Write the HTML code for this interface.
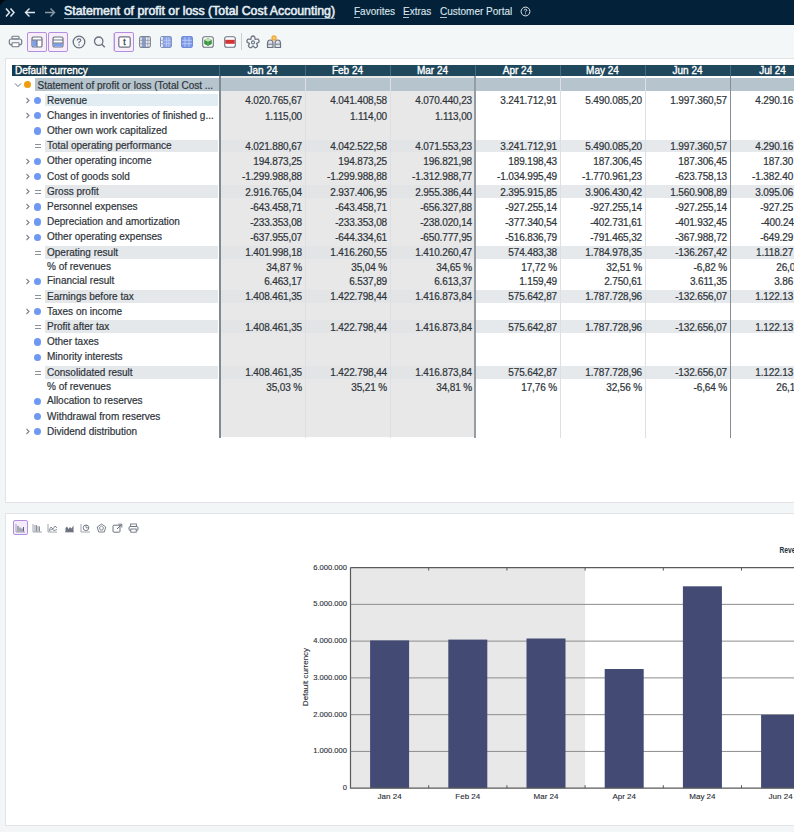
<!DOCTYPE html>
<html><head><meta charset="utf-8"><style>
*{box-sizing:border-box}
html,body{margin:0;padding:0}
body{width:794px;height:832px;overflow:hidden;position:relative;background:#f2f6f7;font-family:"Liberation Sans",sans-serif;color:#2e343a}
.a{position:absolute}
.t{position:absolute;white-space:nowrap;font-size:10px;line-height:12px;-webkit-text-stroke:0.2px currentColor}
.n{letter-spacing:-0.14px}
.r{text-align:right}
</style></head><body>

<div class="a" style="left:0;top:0;width:794px;height:25px;background:#03223a"></div>
<svg class="a" style="left:0;top:0" width="10" height="10" viewBox="0 0 10 10"><path d="M0 0 H8 A8 8 0 0 0 0 8 Z" fill="#02080e"/></svg>
<div class="t" style="left:64px;top:4.6px;font-size:12.35px;line-height:13px;color:#e6eef3;-webkit-text-stroke:0.55px #e6eef3">Statement of profit or loss (Total Cost Accounting)</div>
<div class="a" style="left:64px;top:18.2px;width:271px;height:1px;background:#7fa3b6"></div>
<div class="t" style="left:354px;top:6px;color:#dfe7ec;-webkit-text-stroke:0.1px #dfe7ec">Favorites</div>
<div class="t" style="left:403px;top:6px;color:#dfe7ec;-webkit-text-stroke:0.1px #dfe7ec">Extras</div>
<div class="t" style="left:440px;top:6px;color:#dfe7ec;-webkit-text-stroke:0.1px #dfe7ec">Customer Portal</div>
<div class="a" style="left:0;top:25px;width:794px;height:33px;background:#f3f7f8"></div>
<div class="a" style="left:5px;top:57.6px;width:800px;height:445.4px;background:#fff;border:1px solid #e3e2e7"></div>
<div class="a" style="left:12px;top:65px;width:790px;height:11px;background:#20485c"></div>
<div class="a" style="left:12px;top:65px;width:76px;height:11px;background:#183b4d"></div>
<div class="t" style="left:15px;top:65.3px;color:#fff;-webkit-text-stroke:0.35px #fff">Default currency</div>
<div class="t" style="left:220px;top:65.3px;width:85px;text-align:center;color:#fff;-webkit-text-stroke:0.35px #fff">Jan 24</div>
<div class="t" style="left:305px;top:65.3px;width:85px;text-align:center;color:#fff;-webkit-text-stroke:0.35px #fff">Feb 24</div>
<div class="t" style="left:390px;top:65.3px;width:85px;text-align:center;color:#fff;-webkit-text-stroke:0.35px #fff">Mar 24</div>
<div class="t" style="left:475px;top:65.3px;width:85px;text-align:center;color:#fff;-webkit-text-stroke:0.35px #fff">Apr 24</div>
<div class="t" style="left:560px;top:65.3px;width:85px;text-align:center;color:#fff;-webkit-text-stroke:0.35px #fff">May 24</div>
<div class="t" style="left:645px;top:65.3px;width:85px;text-align:center;color:#fff;-webkit-text-stroke:0.35px #fff">Jun 24</div>
<div class="t" style="left:730px;top:65.3px;width:85px;text-align:center;color:#fff;-webkit-text-stroke:0.35px #fff">Jul 24</div>
<div class="a" style="left:220px;top:76px;width:255px;height:361.3px;background:#e8e8e8"></div>
<div class="a" style="left:35px;top:78.2px;width:770px;height:12.6px;background:#b6c4cd"></div>
<div class="t" style="left:37.5px;top:79.5px;color:#2e343a">Statement of profit or loss (Total Cost ...</div>
<div class="a" style="left:23.5px;top:81.3px;width:7px;height:7px;border-radius:50%;background:#f09c0e"></div>
<svg class="a" style="left:14px;top:82px" width="8" height="6" viewBox="0 0 8 6"><path d="M1 1.5 L4 4.5 L7 1.5" fill="none" stroke="#6b7480" stroke-width="1"/></svg>
<div class="a" style="left:45px;top:94.0px;width:173px;height:12.2px;background:#e1edf2"></div>
<div class="t" style="left:47px;top:94.5px">Revenue</div>
<div class="a" style="left:33.6px;top:96.7px;width:7.6px;height:7.6px;border-radius:50%;background:#6f98f2"></div>
<svg class="a" style="left:24.5px;top:97.0px" width="6" height="7" viewBox="0 0 6 7"><path d="M1.5 1 L4 3.5 L1.5 6" fill="none" stroke="#7a828c" stroke-width="1.1"/></svg>
<div class="t r n" style="left:220px;top:95.4px;width:82px">4.020.765,67</div>
<div class="t r n" style="left:305px;top:95.4px;width:82px">4.041.408,58</div>
<div class="t r n" style="left:390px;top:95.4px;width:82px">4.070.440,23</div>
<div class="t r n" style="left:475px;top:95.4px;width:82px">3.241.712,91</div>
<div class="t r n" style="left:560px;top:95.4px;width:82px">5.490.085,20</div>
<div class="t r n" style="left:645px;top:95.4px;width:82px">1.997.360,57</div>
<div class="t r n" style="left:730px;top:95.4px;width:82px">4.290.16<span style="visibility:hidden">4,87</span></div>
<div class="t" style="left:47px;top:109.7px">Changes in inventories of finished g...</div>
<div class="a" style="left:33.6px;top:111.9px;width:7.6px;height:7.6px;border-radius:50%;background:#6f98f2"></div>
<svg class="a" style="left:24.5px;top:112.2px" width="6" height="7" viewBox="0 0 6 7"><path d="M1.5 1 L4 3.5 L1.5 6" fill="none" stroke="#7a828c" stroke-width="1.1"/></svg>
<div class="t r n" style="left:220px;top:110.6px;width:82px">1.115,00</div>
<div class="t r n" style="left:305px;top:110.6px;width:82px">1.114,00</div>
<div class="t r n" style="left:390px;top:110.6px;width:82px">1.113,00</div>
<div class="t" style="left:47px;top:124.9px">Other own work capitalized</div>
<div class="a" style="left:33.6px;top:127.1px;width:7.6px;height:7.6px;border-radius:50%;background:#6f98f2"></div>
<div class="a" style="left:45px;top:139.5px;width:173px;height:12.8px;background:#e5e8eb"></div>
<div class="a" style="left:220px;top:139.5px;width:255px;height:12.8px;background:#e3e4e6"></div>
<div class="a" style="left:475px;top:139.5px;width:330px;height:12.8px;background:#e6e9ec"></div>
<div class="t" style="left:47px;top:140.1px">Total operating performance</div>
<div class="a" style="left:34.5px;top:144.3px;width:6.5px;height:1px;background:#8a919a"></div>
<div class="a" style="left:34.5px;top:147.3px;width:6.5px;height:1px;background:#8a919a"></div>
<div class="t r n" style="left:220px;top:141.0px;width:82px">4.021.880,67</div>
<div class="t r n" style="left:305px;top:141.0px;width:82px">4.042.522,58</div>
<div class="t r n" style="left:390px;top:141.0px;width:82px">4.071.553,23</div>
<div class="t r n" style="left:475px;top:141.0px;width:82px">3.241.712,91</div>
<div class="t r n" style="left:560px;top:141.0px;width:82px">5.490.085,20</div>
<div class="t r n" style="left:645px;top:141.0px;width:82px">1.997.360,57</div>
<div class="t r n" style="left:730px;top:141.0px;width:82px">4.290.16<span style="visibility:hidden">4,87</span></div>
<div class="t" style="left:47px;top:155.3px">Other operating income</div>
<div class="a" style="left:33.6px;top:157.5px;width:7.6px;height:7.6px;border-radius:50%;background:#6f98f2"></div>
<svg class="a" style="left:24.5px;top:157.8px" width="6" height="7" viewBox="0 0 6 7"><path d="M1.5 1 L4 3.5 L1.5 6" fill="none" stroke="#7a828c" stroke-width="1.1"/></svg>
<div class="t r n" style="left:220px;top:156.2px;width:82px">194.873,25</div>
<div class="t r n" style="left:305px;top:156.2px;width:82px">194.873,25</div>
<div class="t r n" style="left:390px;top:156.2px;width:82px">196.821,98</div>
<div class="t r n" style="left:475px;top:156.2px;width:82px">189.198,43</div>
<div class="t r n" style="left:560px;top:156.2px;width:82px">187.306,45</div>
<div class="t r n" style="left:645px;top:156.2px;width:82px">187.306,45</div>
<div class="t r n" style="left:730px;top:156.2px;width:82px">187.30<span style="visibility:hidden">6,45</span></div>
<div class="t" style="left:47px;top:170.5px">Cost of goods sold</div>
<div class="a" style="left:33.6px;top:172.7px;width:7.6px;height:7.6px;border-radius:50%;background:#6f98f2"></div>
<svg class="a" style="left:24.5px;top:173.0px" width="6" height="7" viewBox="0 0 6 7"><path d="M1.5 1 L4 3.5 L1.5 6" fill="none" stroke="#7a828c" stroke-width="1.1"/></svg>
<div class="t r n" style="left:220px;top:171.4px;width:82px">-1.299.988,88</div>
<div class="t r n" style="left:305px;top:171.4px;width:82px">-1.299.988,88</div>
<div class="t r n" style="left:390px;top:171.4px;width:82px">-1.312.988,77</div>
<div class="t r n" style="left:475px;top:171.4px;width:82px">-1.034.995,49</div>
<div class="t r n" style="left:560px;top:171.4px;width:82px">-1.770.961,23</div>
<div class="t r n" style="left:645px;top:171.4px;width:82px">-623.758,13</div>
<div class="t r n" style="left:730px;top:171.4px;width:82px">-1.382.40<span style="visibility:hidden">4,12</span></div>
<div class="a" style="left:45px;top:185.1px;width:173px;height:12.8px;background:#e5e8eb"></div>
<div class="a" style="left:220px;top:185.1px;width:255px;height:12.8px;background:#e3e4e6"></div>
<div class="a" style="left:475px;top:185.1px;width:330px;height:12.8px;background:#e6e9ec"></div>
<div class="t" style="left:47px;top:185.7px">Gross profit</div>
<div class="a" style="left:34.5px;top:189.9px;width:6.5px;height:1px;background:#8a919a"></div>
<div class="a" style="left:34.5px;top:192.9px;width:6.5px;height:1px;background:#8a919a"></div>
<svg class="a" style="left:24.5px;top:188.2px" width="6" height="7" viewBox="0 0 6 7"><path d="M1.5 1 L4 3.5 L1.5 6" fill="none" stroke="#7a828c" stroke-width="1.1"/></svg>
<div class="t r n" style="left:220px;top:186.6px;width:82px">2.916.765,04</div>
<div class="t r n" style="left:305px;top:186.6px;width:82px">2.937.406,95</div>
<div class="t r n" style="left:390px;top:186.6px;width:82px">2.955.386,44</div>
<div class="t r n" style="left:475px;top:186.6px;width:82px">2.395.915,85</div>
<div class="t r n" style="left:560px;top:186.6px;width:82px">3.906.430,42</div>
<div class="t r n" style="left:645px;top:186.6px;width:82px">1.560.908,89</div>
<div class="t r n" style="left:730px;top:186.6px;width:82px">3.095.06<span style="visibility:hidden">7,20</span></div>
<div class="t" style="left:47px;top:200.9px">Personnel expenses</div>
<div class="a" style="left:33.6px;top:203.1px;width:7.6px;height:7.6px;border-radius:50%;background:#6f98f2"></div>
<svg class="a" style="left:24.5px;top:203.4px" width="6" height="7" viewBox="0 0 6 7"><path d="M1.5 1 L4 3.5 L1.5 6" fill="none" stroke="#7a828c" stroke-width="1.1"/></svg>
<div class="t r n" style="left:220px;top:201.8px;width:82px">-643.458,71</div>
<div class="t r n" style="left:305px;top:201.8px;width:82px">-643.458,71</div>
<div class="t r n" style="left:390px;top:201.8px;width:82px">-656.327,88</div>
<div class="t r n" style="left:475px;top:201.8px;width:82px">-927.255,14</div>
<div class="t r n" style="left:560px;top:201.8px;width:82px">-927.255,14</div>
<div class="t r n" style="left:645px;top:201.8px;width:82px">-927.255,14</div>
<div class="t r n" style="left:730px;top:201.8px;width:82px">-927.25<span style="visibility:hidden">5,14</span></div>
<div class="t" style="left:47px;top:216.1px">Depreciation and amortization</div>
<div class="a" style="left:33.6px;top:218.3px;width:7.6px;height:7.6px;border-radius:50%;background:#6f98f2"></div>
<svg class="a" style="left:24.5px;top:218.6px" width="6" height="7" viewBox="0 0 6 7"><path d="M1.5 1 L4 3.5 L1.5 6" fill="none" stroke="#7a828c" stroke-width="1.1"/></svg>
<div class="t r n" style="left:220px;top:217.0px;width:82px">-233.353,08</div>
<div class="t r n" style="left:305px;top:217.0px;width:82px">-233.353,08</div>
<div class="t r n" style="left:390px;top:217.0px;width:82px">-238.020,14</div>
<div class="t r n" style="left:475px;top:217.0px;width:82px">-377.340,54</div>
<div class="t r n" style="left:560px;top:217.0px;width:82px">-402.731,61</div>
<div class="t r n" style="left:645px;top:217.0px;width:82px">-401.932,45</div>
<div class="t r n" style="left:730px;top:217.0px;width:82px">-400.24<span style="visibility:hidden">5,11</span></div>
<div class="t" style="left:47px;top:231.3px">Other operating expenses</div>
<div class="a" style="left:33.6px;top:233.5px;width:7.6px;height:7.6px;border-radius:50%;background:#6f98f2"></div>
<svg class="a" style="left:24.5px;top:233.8px" width="6" height="7" viewBox="0 0 6 7"><path d="M1.5 1 L4 3.5 L1.5 6" fill="none" stroke="#7a828c" stroke-width="1.1"/></svg>
<div class="t r n" style="left:220px;top:232.2px;width:82px">-637.955,07</div>
<div class="t r n" style="left:305px;top:232.2px;width:82px">-644.334,61</div>
<div class="t r n" style="left:390px;top:232.2px;width:82px">-650.777,95</div>
<div class="t r n" style="left:475px;top:232.2px;width:82px">-516.836,79</div>
<div class="t r n" style="left:560px;top:232.2px;width:82px">-791.465,32</div>
<div class="t r n" style="left:645px;top:232.2px;width:82px">-367.988,72</div>
<div class="t r n" style="left:730px;top:232.2px;width:82px">-649.29<span style="visibility:hidden">3,61</span></div>
<div class="a" style="left:45px;top:245.9px;width:173px;height:12.8px;background:#e5e8eb"></div>
<div class="a" style="left:220px;top:245.9px;width:255px;height:12.8px;background:#e3e4e6"></div>
<div class="a" style="left:475px;top:245.9px;width:330px;height:12.8px;background:#e6e9ec"></div>
<div class="t" style="left:47px;top:246.5px">Operating result</div>
<div class="a" style="left:34.5px;top:250.7px;width:6.5px;height:1px;background:#8a919a"></div>
<div class="a" style="left:34.5px;top:253.7px;width:6.5px;height:1px;background:#8a919a"></div>
<div class="t r n" style="left:220px;top:247.4px;width:82px">1.401.998,18</div>
<div class="t r n" style="left:305px;top:247.4px;width:82px">1.416.260,55</div>
<div class="t r n" style="left:390px;top:247.4px;width:82px">1.410.260,47</div>
<div class="t r n" style="left:475px;top:247.4px;width:82px">574.483,38</div>
<div class="t r n" style="left:560px;top:247.4px;width:82px">1.784.978,35</div>
<div class="t r n" style="left:645px;top:247.4px;width:82px">-136.267,42</div>
<div class="t r n" style="left:730px;top:247.4px;width:82px">1.118.27<span style="visibility:hidden">3,34</span></div>
<div class="t" style="left:47px;top:260.9px">% of revenues</div>
<div class="t r n" style="left:220px;top:261.8px;width:82px">34,87 %</div>
<div class="t r n" style="left:305px;top:261.8px;width:82px">35,04 %</div>
<div class="t r n" style="left:390px;top:261.8px;width:82px">34,65 %</div>
<div class="t r n" style="left:475px;top:261.8px;width:82px">17,72 %</div>
<div class="t r n" style="left:560px;top:261.8px;width:82px">32,51 %</div>
<div class="t r n" style="left:645px;top:261.8px;width:82px">-6,82 %</div>
<div class="t r n" style="left:730px;top:261.8px;width:82px">26,0<span style="visibility:hidden">7 %</span></div>
<div class="t" style="left:47px;top:275.3px">Financial result</div>
<div class="a" style="left:33.6px;top:277.5px;width:7.6px;height:7.6px;border-radius:50%;background:#6f98f2"></div>
<svg class="a" style="left:24.5px;top:277.8px" width="6" height="7" viewBox="0 0 6 7"><path d="M1.5 1 L4 3.5 L1.5 6" fill="none" stroke="#7a828c" stroke-width="1.1"/></svg>
<div class="t r n" style="left:220px;top:276.2px;width:82px">6.463,17</div>
<div class="t r n" style="left:305px;top:276.2px;width:82px">6.537,89</div>
<div class="t r n" style="left:390px;top:276.2px;width:82px">6.613,37</div>
<div class="t r n" style="left:475px;top:276.2px;width:82px">1.159,49</div>
<div class="t r n" style="left:560px;top:276.2px;width:82px">2.750,61</div>
<div class="t r n" style="left:645px;top:276.2px;width:82px">3.611,35</div>
<div class="t r n" style="left:730px;top:276.2px;width:82px">3.86<span style="visibility:hidden">2,40</span></div>
<div class="a" style="left:45px;top:289.9px;width:173px;height:12.8px;background:#e5e8eb"></div>
<div class="a" style="left:220px;top:289.9px;width:255px;height:12.8px;background:#e3e4e6"></div>
<div class="a" style="left:475px;top:289.9px;width:330px;height:12.8px;background:#e6e9ec"></div>
<div class="t" style="left:47px;top:290.5px">Earnings before tax</div>
<div class="a" style="left:34.5px;top:294.7px;width:6.5px;height:1px;background:#8a919a"></div>
<div class="a" style="left:34.5px;top:297.7px;width:6.5px;height:1px;background:#8a919a"></div>
<div class="t r n" style="left:220px;top:291.4px;width:82px">1.408.461,35</div>
<div class="t r n" style="left:305px;top:291.4px;width:82px">1.422.798,44</div>
<div class="t r n" style="left:390px;top:291.4px;width:82px">1.416.873,84</div>
<div class="t r n" style="left:475px;top:291.4px;width:82px">575.642,87</div>
<div class="t r n" style="left:560px;top:291.4px;width:82px">1.787.728,96</div>
<div class="t r n" style="left:645px;top:291.4px;width:82px">-132.656,07</div>
<div class="t r n" style="left:730px;top:291.4px;width:82px">1.122.13<span style="visibility:hidden">5,74</span></div>
<div class="t" style="left:47px;top:305.7px">Taxes on income</div>
<div class="a" style="left:33.6px;top:307.9px;width:7.6px;height:7.6px;border-radius:50%;background:#6f98f2"></div>
<svg class="a" style="left:24.5px;top:308.2px" width="6" height="7" viewBox="0 0 6 7"><path d="M1.5 1 L4 3.5 L1.5 6" fill="none" stroke="#7a828c" stroke-width="1.1"/></svg>
<div class="a" style="left:45px;top:320.3px;width:173px;height:12.8px;background:#e5e8eb"></div>
<div class="a" style="left:220px;top:320.3px;width:255px;height:12.8px;background:#e3e4e6"></div>
<div class="a" style="left:475px;top:320.3px;width:330px;height:12.8px;background:#e6e9ec"></div>
<div class="t" style="left:47px;top:320.9px">Profit after tax</div>
<div class="a" style="left:34.5px;top:325.1px;width:6.5px;height:1px;background:#8a919a"></div>
<div class="a" style="left:34.5px;top:328.1px;width:6.5px;height:1px;background:#8a919a"></div>
<div class="t r n" style="left:220px;top:321.8px;width:82px">1.408.461,35</div>
<div class="t r n" style="left:305px;top:321.8px;width:82px">1.422.798,44</div>
<div class="t r n" style="left:390px;top:321.8px;width:82px">1.416.873,84</div>
<div class="t r n" style="left:475px;top:321.8px;width:82px">575.642,87</div>
<div class="t r n" style="left:560px;top:321.8px;width:82px">1.787.728,96</div>
<div class="t r n" style="left:645px;top:321.8px;width:82px">-132.656,07</div>
<div class="t r n" style="left:730px;top:321.8px;width:82px">1.122.13<span style="visibility:hidden">5,74</span></div>
<div class="t" style="left:47px;top:336.1px">Other taxes</div>
<div class="a" style="left:33.6px;top:338.3px;width:7.6px;height:7.6px;border-radius:50%;background:#6f98f2"></div>
<div class="t" style="left:47px;top:351.3px">Minority interests</div>
<div class="a" style="left:33.6px;top:353.5px;width:7.6px;height:7.6px;border-radius:50%;background:#6f98f2"></div>
<div class="a" style="left:45px;top:365.9px;width:173px;height:12.8px;background:#e5e8eb"></div>
<div class="a" style="left:220px;top:365.9px;width:255px;height:12.8px;background:#e3e4e6"></div>
<div class="a" style="left:475px;top:365.9px;width:330px;height:12.8px;background:#e6e9ec"></div>
<div class="t" style="left:47px;top:366.5px">Consolidated result</div>
<div class="a" style="left:34.5px;top:370.7px;width:6.5px;height:1px;background:#8a919a"></div>
<div class="a" style="left:34.5px;top:373.7px;width:6.5px;height:1px;background:#8a919a"></div>
<div class="t r n" style="left:220px;top:367.4px;width:82px">1.408.461,35</div>
<div class="t r n" style="left:305px;top:367.4px;width:82px">1.422.798,44</div>
<div class="t r n" style="left:390px;top:367.4px;width:82px">1.416.873,84</div>
<div class="t r n" style="left:475px;top:367.4px;width:82px">575.642,87</div>
<div class="t r n" style="left:560px;top:367.4px;width:82px">1.787.728,96</div>
<div class="t r n" style="left:645px;top:367.4px;width:82px">-132.656,07</div>
<div class="t r n" style="left:730px;top:367.4px;width:82px">1.122.13<span style="visibility:hidden">5,74</span></div>
<div class="t" style="left:47px;top:380.9px">% of revenues</div>
<div class="t r n" style="left:220px;top:381.8px;width:82px">35,03 %</div>
<div class="t r n" style="left:305px;top:381.8px;width:82px">35,21 %</div>
<div class="t r n" style="left:390px;top:381.8px;width:82px">34,81 %</div>
<div class="t r n" style="left:475px;top:381.8px;width:82px">17,76 %</div>
<div class="t r n" style="left:560px;top:381.8px;width:82px">32,56 %</div>
<div class="t r n" style="left:645px;top:381.8px;width:82px">-6,64 %</div>
<div class="t r n" style="left:730px;top:381.8px;width:82px">26,1<span style="visibility:hidden">6 %</span></div>
<div class="t" style="left:47px;top:395.3px">Allocation to reserves</div>
<div class="a" style="left:33.6px;top:397.5px;width:7.6px;height:7.6px;border-radius:50%;background:#6f98f2"></div>
<div class="t" style="left:47px;top:410.5px">Withdrawal from reserves</div>
<div class="a" style="left:33.6px;top:412.7px;width:7.6px;height:7.6px;border-radius:50%;background:#6f98f2"></div>
<div class="t" style="left:47px;top:425.7px">Dividend distribution</div>
<div class="a" style="left:33.6px;top:427.9px;width:7.6px;height:7.6px;border-radius:50%;background:#6f98f2"></div>
<svg class="a" style="left:24.5px;top:428.2px" width="6" height="7" viewBox="0 0 6 7"><path d="M1.5 1 L4 3.5 L1.5 6" fill="none" stroke="#7a828c" stroke-width="1.1"/></svg>
<div class="a" style="left:219px;top:76px;width:2px;height:361.5px;background:#7f8a92"></div>
<div class="a" style="left:474.3px;top:76px;width:1.6px;height:361.5px;background:#959ca2"></div>
<div class="a" style="left:729.6px;top:76px;width:1.6px;height:361.5px;background:#868d94"></div>
<div class="a" style="left:305px;top:76px;width:1px;height:361.5px;background:#dcdfe6"></div>
<div class="a" style="left:390px;top:76px;width:1px;height:361.5px;background:#dcdfe6"></div>
<div class="a" style="left:560px;top:76px;width:1px;height:361.5px;background:#dcdfe6"></div>
<div class="a" style="left:645px;top:76px;width:1px;height:361.5px;background:#dcdfe6"></div>
<div class="a" style="left:219px;top:65px;width:1px;height:11px;background:#4d6a7c"></div>
<div class="a" style="left:305px;top:65px;width:1px;height:11px;background:#4d6a7c"></div>
<div class="a" style="left:390px;top:65px;width:1px;height:11px;background:#4d6a7c"></div>
<div class="a" style="left:475px;top:65px;width:1px;height:11px;background:#4d6a7c"></div>
<div class="a" style="left:560px;top:65px;width:1px;height:11px;background:#4d6a7c"></div>
<div class="a" style="left:645px;top:65px;width:1px;height:11px;background:#4d6a7c"></div>
<div class="a" style="left:730px;top:65px;width:1px;height:11px;background:#4d6a7c"></div>
<div class="a" style="left:5px;top:513px;width:800px;height:312.8px;background:#fff;border:1px solid #e3e4e7"></div>
<svg class="a" style="left:4px;top:7px" width="12" height="11" viewBox="0 0 12 11"><path d="M2 1.5 L5.5 5.5 L2 9.5 M6.5 1.5 L10 5.5 L6.5 9.5" fill="none" stroke="#dfe8ee" stroke-width="1.5"/></svg>
<svg class="a" style="left:24px;top:7px" width="12" height="11" viewBox="0 0 12 11"><path d="M11 5.5 H1.5 M5.5 1.5 L1.5 5.5 L5.5 9.5" fill="none" stroke="#dfe8ee" stroke-width="1.4"/></svg>
<svg class="a" style="left:44px;top:7px" width="12" height="11" viewBox="0 0 12 11"><path d="M1 5.5 H10.5 M6.5 1.5 L10.5 5.5 L6.5 9.5" fill="none" stroke="#8c9aa6" stroke-width="1.4"/></svg>
<div class="a" style="left:354px;top:17.3px;width:6px;height:0.8px;background:#aebfca"></div>
<div class="a" style="left:403px;top:17.3px;width:6px;height:0.8px;background:#aebfca"></div>
<div class="a" style="left:440px;top:17.3px;width:7px;height:0.8px;background:#aebfca"></div>
<svg class="a" style="left:519.5px;top:6.3px" width="11" height="11" viewBox="0 0 11 11"><circle cx="5.5" cy="5.5" r="4.4" fill="none" stroke="#dfe7ec" stroke-width="1"/><path d="M4.2 4.5 Q4.2 3.2 5.5 3.2 Q6.8 3.2 6.8 4.3 Q6.8 5.1 5.5 5.6 V6.4" fill="none" stroke="#dfe7ec" stroke-width="0.9"/><circle cx="5.5" cy="7.7" r="0.55" fill="#dfe7ec"/></svg>
<svg class="a" style="left:8px;top:35px" width="15" height="13" viewBox="0 0 15 13"><rect x="4" y="1.2" width="7" height="2.8" rx="0.8" fill="none" stroke="#767c86" stroke-width="1.1"/><rect x="1.3" y="4" width="12.4" height="5.8" rx="2" fill="none" stroke="#767c86" stroke-width="1.2"/><rect x="4" y="7.8" width="7" height="4" rx="0.6" fill="#fff" stroke="#767c86" stroke-width="1.1"/></svg>
<div class="a" style="left:27px;top:32px;width:19.5px;height:20px;border:1px solid #b48ee3;border-radius:2px;background:#f8eefa"></div>
<div class="a" style="left:48px;top:32px;width:19.5px;height:20px;border:1px solid #b48ee3;border-radius:2px;background:#f8eefa"></div>
<div class="a" style="left:114px;top:32px;width:19.5px;height:20px;border:1px solid #b48ee3;border-radius:2px;background:#f8eefa"></div>
<svg class="a" style="left:30.5px;top:36px" width="12" height="12" viewBox="0 0 12 12"><rect x="1" y="1" width="10" height="10" rx="1.6" fill="#fff" stroke="#6b7280" stroke-width="1.2"/><rect x="1.6" y="4.2" width="4.4" height="6.2" fill="#7b9ef0"/><path d="M1 4 H11 M6 4 V11" stroke="#6b7280" stroke-width="1.1"/></svg>
<svg class="a" style="left:52px;top:36px" width="12" height="12" viewBox="0 0 12 12"><rect x="1" y="1" width="10" height="10" rx="1.6" fill="#fff" stroke="#6b7280" stroke-width="1.2"/><rect x="1.6" y="7.3" width="8.8" height="3.1" fill="#7b9ef0"/><path d="M1 4 H11 M1 7 H11" stroke="#6b7280" stroke-width="1.1"/></svg>
<svg class="a" style="left:72px;top:35px" width="14" height="14" viewBox="0 0 14 14"><circle cx="7" cy="7" r="5.8" fill="none" stroke="#6b7280" stroke-width="1.3"/><path d="M5.2 5.6 Q5.2 3.8 7 3.8 Q8.8 3.8 8.8 5.3 Q8.8 6.4 7 7.2 V8.3" fill="none" stroke="#6b7280" stroke-width="1.2"/><circle cx="7" cy="10.1" r="0.75" fill="#6b7280"/></svg>
<svg class="a" style="left:93px;top:36px" width="13" height="12" viewBox="0 0 13 12"><circle cx="5.7" cy="5.2" r="4.2" fill="none" stroke="#6b7280" stroke-width="1.3"/><path d="M8.8 8.3 L11.8 11.2" stroke="#6b7280" stroke-width="1.4"/></svg>
<div class="a" style="left:112.5px;top:33px;width:1px;height:18px;background:#d9cfe6"></div>
<svg class="a" style="left:117.5px;top:36px" width="13" height="12" viewBox="0 0 13 12"><rect x="0.8" y="0.8" width="11.4" height="10.4" rx="1.6" fill="#fff" stroke="#6b7280" stroke-width="1.2"/><text x="6.5" y="9.2" text-anchor="middle" font-family="Liberation Sans" font-size="8.6" fill="#3b4048" stroke="#3b4048" stroke-width="0.3">t</text></svg>
<svg class="a" style="left:139px;top:36px" width="12" height="12" viewBox="0 0 12 12"><rect x="0.6" y="0.6" width="10.8" height="10.8" rx="1.6" fill="#f4f5f8" stroke="#7b8292" stroke-width="1.1"/><rect x="3.3" y="1" width="3.2" height="10" fill="#7f9be0"/><path d="M3.2 1 V11 M6.6 1 V11 M8.9 1 V11 M1 4.3 H11 M1 7.7 H11" stroke="#8a90a0" stroke-width="0.8"/></svg>
<svg class="a" style="left:160px;top:36px" width="12" height="12" viewBox="0 0 12 12"><rect x="0.6" y="0.6" width="10.8" height="10.8" rx="1.6" fill="#8aa6ee" stroke="#7f8fc0" stroke-width="1.1"/><rect x="1" y="1" width="2.2" height="10" fill="#e9edf5"/><path d="M3.3 1 V11 M1 4.3 H11 M1 7.7 H11" stroke="#8a94b8" stroke-width="0.8"/><path d="M6.6 1 V11 M8.9 1 V11 M3.5 4.3 H11 M3.5 7.7 H11" stroke="#c9d6fa" stroke-width="0.7"/></svg>
<svg class="a" style="left:181px;top:36px" width="12" height="12" viewBox="0 0 12 12"><rect x="0.6" y="0.6" width="10.8" height="10.8" rx="1.6" fill="#7d9ae8" stroke="#6f8bd8" stroke-width="1.1"/><path d="M4 1 V11 M8 1 V11 M1 4.3 H11 M1 7.7 H11" stroke="#c3d2fa" stroke-width="0.8"/></svg>
<svg class="a" style="left:202px;top:36px" width="12" height="12" viewBox="0 0 12 12"><rect x="0.7" y="0.7" width="10.6" height="10.6" rx="2" fill="#fff" stroke="#6b7280" stroke-width="1.1"/><path d="M6 2 L9.8 3.9 V8.1 L6 10 L2.2 8.1 V3.9 Z" fill="#3d9444"/><path d="M2.2 3.9 L6 5.8 L9.8 3.9 L6 2 Z" fill="#bfe3b0"/><path d="M6 5.8 V10" stroke="#8bc77e" stroke-width="0.6"/></svg>
<svg class="a" style="left:223.5px;top:36px" width="12" height="12" viewBox="0 0 12 12"><rect x="0.7" y="0.7" width="10.6" height="10.6" rx="2" fill="#fff" stroke="#6b7280" stroke-width="1.1"/><rect x="1.3" y="3.8" width="9.4" height="4" fill="#d43333"/></svg>
<div class="a" style="left:241px;top:33px;width:1px;height:17px;background:#c9cdd3"></div>
<svg class="a" style="left:246px;top:35px" width="14" height="14" viewBox="0 0 14 14"><path d="M4.83 4.31 L5.37 1.63 Q7.00 0.40 8.63 1.63 L9.17 4.31 L11.89 4.00 Q13.56 5.17 12.90 7.10 L10.52 8.44 L11.65 10.93 Q11.06 12.88 9.01 12.85 L7.00 11.00 L4.99 12.85 Q2.94 12.88 2.35 10.93 L3.48 8.44 L1.10 7.10 Q0.44 5.17 2.11 4.00 L4.83 4.31 Z" fill="none" stroke="#6b7280" stroke-width="1.25" stroke-linejoin="round"/><circle cx="7" cy="7.4" r="1.5" fill="none" stroke="#6b7280" stroke-width="1.1"/></svg>
<svg class="a" style="left:266px;top:34px" width="16" height="15" viewBox="0 0 16 15"><path d="M1.5 13.5 V9.5 Q1.5 6 4.3 6 Q7 6 7 9.5 V13.5 Z M9 13.5 V9.5 Q9 6 11.7 6 Q14.5 6 14.5 9.5 V13.5 Z" fill="#dfe2e8" stroke="#6b7280" stroke-width="1.2" stroke-linejoin="round"/><path d="M1.8 10.2 H6.8 M9.2 10.2 H14.2" stroke="#6b7280" stroke-width="0.9"/><circle cx="8" cy="4" r="2.7" fill="#f2a93b"/><circle cx="8" cy="4" r="1.2" fill="#f7cf7c"/></svg>
<svg class="a" style="left:0;top:0" width="794" height="832" viewBox="0 0 794 832"><rect x="350.5" y="567.6" width="234.6" height="220.6" fill="#e8e8e8"/><line x1="350.5" y1="751.43" x2="794" y2="751.43" stroke="#8d8d8d" stroke-width="1"/><line x1="350.5" y1="714.67" x2="794" y2="714.67" stroke="#8d8d8d" stroke-width="1"/><line x1="350.5" y1="677.90" x2="794" y2="677.90" stroke="#8d8d8d" stroke-width="1"/><line x1="350.5" y1="641.13" x2="794" y2="641.13" stroke="#8d8d8d" stroke-width="1"/><line x1="350.5" y1="604.37" x2="794" y2="604.37" stroke="#8d8d8d" stroke-width="1"/><rect x="370.1" y="640.4" width="39" height="147.8" fill="#434a73"/><rect x="448.3" y="639.6" width="39" height="148.6" fill="#434a73"/><rect x="526.5" y="638.5" width="39" height="149.7" fill="#434a73"/><rect x="604.7" y="669.0" width="39" height="119.2" fill="#434a73"/><rect x="682.9" y="586.3" width="39" height="201.9" fill="#434a73"/><rect x="761.1" y="714.8" width="39" height="73.4" fill="#434a73"/><rect x="839.3" y="630.5" width="39" height="157.7" fill="#434a73"/><path d="M350.5 567.6 V788.2 H794 M350.5 567.6 H794" fill="none" stroke="#5a5a5a" stroke-width="1.2"/><path d="M428.7 788.2 v-3 M428.7 567.6 v3" stroke="#5a5a5a" stroke-width="1"/><path d="M506.9 788.2 v-3 M506.9 567.6 v3" stroke="#5a5a5a" stroke-width="1"/><path d="M585.1 788.2 v-3 M585.1 567.6 v3" stroke="#5a5a5a" stroke-width="1"/><path d="M663.3 788.2 v-3 M663.3 567.6 v3" stroke="#5a5a5a" stroke-width="1"/><path d="M741.5 788.2 v-3 M741.5 567.6 v3" stroke="#5a5a5a" stroke-width="1"/><path d="M819.7 788.2 v-3 M819.7 567.6 v3" stroke="#5a5a5a" stroke-width="1"/><text x="347" y="790.1" text-anchor="end" font-family="Liberation Sans" font-size="7.6" fill="#2b2f36" stroke="#2b2f36" stroke-width="0.12">0</text><text x="347" y="753.3" text-anchor="end" font-family="Liberation Sans" font-size="7.6" fill="#2b2f36" stroke="#2b2f36" stroke-width="0.12">1.000.000</text><text x="347" y="716.6" text-anchor="end" font-family="Liberation Sans" font-size="7.6" fill="#2b2f36" stroke="#2b2f36" stroke-width="0.12">2.000.000</text><text x="347" y="679.8" text-anchor="end" font-family="Liberation Sans" font-size="7.6" fill="#2b2f36" stroke="#2b2f36" stroke-width="0.12">3.000.000</text><text x="347" y="643.0" text-anchor="end" font-family="Liberation Sans" font-size="7.6" fill="#2b2f36" stroke="#2b2f36" stroke-width="0.12">4.000.000</text><text x="347" y="606.3" text-anchor="end" font-family="Liberation Sans" font-size="7.6" fill="#2b2f36" stroke="#2b2f36" stroke-width="0.12">5.000.000</text><text x="347" y="569.5" text-anchor="end" font-family="Liberation Sans" font-size="7.6" fill="#2b2f36" stroke="#2b2f36" stroke-width="0.12">6.000.000</text><text x="389.6" y="799.2" text-anchor="middle" font-family="Liberation Sans" font-size="8" fill="#2b2f36" stroke="#2b2f36" stroke-width="0.12">Jan 24</text><text x="467.8" y="799.2" text-anchor="middle" font-family="Liberation Sans" font-size="8" fill="#2b2f36" stroke="#2b2f36" stroke-width="0.12">Feb 24</text><text x="546.0" y="799.2" text-anchor="middle" font-family="Liberation Sans" font-size="8" fill="#2b2f36" stroke="#2b2f36" stroke-width="0.12">Mar 24</text><text x="624.2" y="799.2" text-anchor="middle" font-family="Liberation Sans" font-size="8" fill="#2b2f36" stroke="#2b2f36" stroke-width="0.12">Apr 24</text><text x="702.4" y="799.2" text-anchor="middle" font-family="Liberation Sans" font-size="8" fill="#2b2f36" stroke="#2b2f36" stroke-width="0.12">May 24</text><text x="780.6" y="799.2" text-anchor="middle" font-family="Liberation Sans" font-size="8" fill="#2b2f36" stroke="#2b2f36" stroke-width="0.12">Jun 24</text><text transform="translate(308 677) rotate(-90)" text-anchor="middle" font-family="Liberation Sans" font-size="8" fill="#2b2f36" stroke="#2b2f36" stroke-width="0.12">Default currency</text><text x="779.4" y="552.9" font-family="Liberation Sans" font-size="8.7" font-weight="bold" textLength="16" lengthAdjust="spacingAndGlyphs" fill="#1f3340">Reve</text></svg>
<div class="a" style="left:12.5px;top:519.5px;width:15px;height:15px;border:1px solid #b48ee3;border-radius:2px;background:#f3ecfb"></div>
<svg class="a" style="left:15px;top:522.5px" width="11" height="11" viewBox="0 0 11 11"><path d="M1 1 V9 H10" stroke="#8a8fa0" fill="none" stroke-width="0.8"/><path d="M3 8.5 V3 M5 8.5 V4.5 M7 8.5 V5.5 M8.5 8.5 V4" stroke="#5d6370" stroke-width="1"/></svg>
<svg class="a" style="left:31.5px;top:522.5px" width="11" height="11" viewBox="0 0 11 11"><path d="M1 1 V9 H10" stroke="#8a8fa0" fill="none" stroke-width="0.8"/><path d="M3 8.5 V2 M4.5 8.5 V2 M6 8.5 V3 M7.5 8.5 V3.5" stroke="#6d7380" stroke-width="0.8"/></svg>
<svg class="a" style="left:47px;top:522.5px" width="11" height="11" viewBox="0 0 11 11"><path d="M1 1 V9 H10" stroke="#8a8fa0" fill="none" stroke-width="0.8"/><path d="M2 7 L4 4 L6 6 L8 3 L10 5 M2 8 L5 6 L7 7.5 L10 6.5" stroke="#6d7380" fill="none" stroke-width="0.8"/></svg>
<svg class="a" style="left:63.5px;top:522.5px" width="11" height="11" viewBox="0 0 11 11"><path d="M1 9 H10" stroke="#8a8fa0" fill="none" stroke-width="0.8"/><path d="M1.5 9 V5 L3 3.5 L4.5 6 L6 4 L7.5 5.5 L9.5 2.5 V9 Z" fill="#6d7380"/></svg>
<svg class="a" style="left:79.5px;top:522.5px" width="11" height="11" viewBox="0 0 11 11"><path d="M1 1 V9 H10" stroke="#8a8fa0" fill="none" stroke-width="0.8"/><circle cx="6" cy="4.8" r="2.8" fill="none" stroke="#6d7380" stroke-width="0.9"/><path d="M6 4.8 V2 M6 4.8 H8.8" stroke="#6d7380" stroke-width="0.8"/></svg>
<svg class="a" style="left:96px;top:522.5px" width="11" height="11" viewBox="0 0 11 11"><path d="M5.5 1 L9.8 4 L8.3 9 H2.7 L1.2 4 Z" fill="none" stroke="#6d7380" stroke-width="0.9"/><path d="M5.5 3 L7.5 4.5 L6.8 7 H4.2 L3.5 4.5 Z" fill="none" stroke="#6d7380" stroke-width="0.8"/></svg>
<svg class="a" style="left:112px;top:522.5px" width="11" height="11" viewBox="0 0 11 11"><rect x="1" y="2.2" width="7" height="7" rx="1" fill="none" stroke="#6d7380" stroke-width="1"/><path d="M5 6 L9.5 1.5 M6.5 1.2 H9.8 V4.5" fill="none" stroke="#6d7380" stroke-width="1"/></svg>
<svg class="a" style="left:128px;top:522.5px" width="11" height="11" viewBox="0 0 11 11"><rect x="2.6" y="1" width="5.8" height="2.5" fill="none" stroke="#6d7380" stroke-width="0.9"/><rect x="1" y="3.5" width="9" height="4" rx="1.2" fill="none" stroke="#6d7380" stroke-width="1"/><rect x="2.8" y="6" width="5.4" height="3.2" fill="#fff" stroke="#6d7380" stroke-width="0.9"/></svg>
</body></html>
